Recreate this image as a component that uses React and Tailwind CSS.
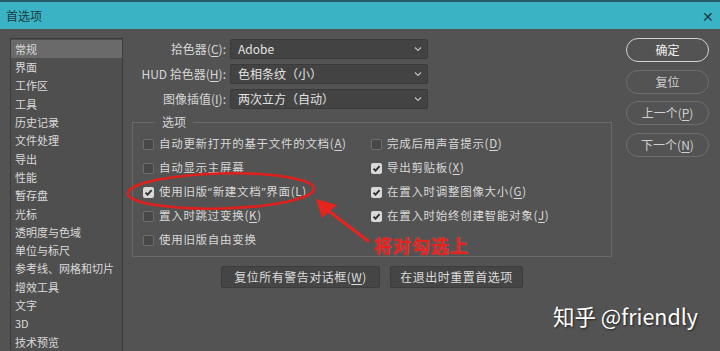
import React from "react";

const font = { fontFamily: '"Noto Sans CJK SC", "Noto Sans", sans-serif' };

const navItems = [
  "常规", "界面", "工作区", "工具", "历史记录", "文件处理", "导出", "性能", "暂存盘", "光标",
  "透明度与色域", "单位与标尺", "参考线、网格和切片", "增效工具", "文字", "3D", "技术预览",
];

function Key({ k }) {
  return (
    <>
      (<span className="underline underline-offset-2">{k}</span>)
    </>
  );
}

function Q({ children }) {
  return <span className="font-['Noto_Sans',sans-serif]">{children}</span>;
}

function Select({ label, k, value, prefix }) {
  return (
    <div className="flex items-center h-[20px]">
      <div className="w-[94px] text-right text-[12px] text-[#d6d6d6] whitespace-nowrap">
        {prefix}
        {label}
        <Key k={k} />:
      </div>
      <div className="ml-[4px] w-[198px] h-[20px] bg-[#434343] border border-[#3a3a3a] rounded-[2px] flex items-center justify-between pl-[7px] pr-[5px] text-[12px] text-[#e2e2e2]">
        <span>{value}</span>
        <svg width="8" height="6" viewBox="0 0 8 6" fill="none">
          <path d="M1 1.5 L4 4.5 L7 1.5" stroke="#bdbdbd" strokeWidth="1.2" />
        </svg>
      </div>
    </div>
  );
}

function Check({ checked, children }) {
  return (
    <div className="flex items-center h-[24px] text-[11.5px] text-[#d8d8d8] tracking-[0.7px] whitespace-nowrap">
      {checked ? (
        <div className="w-[11px] h-[11px] rounded-[2px] bg-[#d9d9d9] flex items-center justify-center">
          <svg width="9" height="9" viewBox="0 0 9 9" fill="none">
            <path d="M1.5 4.6 L3.6 6.7 L7.6 2.2" stroke="#2e2e2e" strokeWidth="1.8" />
          </svg>
        </div>
      ) : (
        <div className="w-[11px] h-[11px] rounded-[2px] bg-[#474747] border border-[#6d6d6d]" />
      )}
      <span className="ml-[5px]">{children}</span>
    </div>
  );
}

function RoundBtn({ children, primary }) {
  return (
    <div
      className={
        "h-[24px] w-[83px] rounded-full flex items-center justify-center text-[12px] " +
        (primary
          ? "border-[1.5px] border-[#d2d2d2] text-[#f0f0f0]"
          : "border-[1.5px] border-[#6e6e6e] text-[#d0d0d0]")
      }
    >
      {children}
    </div>
  );
}

export default function App() {
  return (
    <div style={font} className="relative w-[720px] h-[351px] overflow-hidden bg-[#535353]">
      {/* title bar */}
      <div className="h-[29px] bg-[#3ab4c5] border-t-2 border-[#275c66] flex items-center justify-between pl-[6px] pr-[6px]">
        <span className="text-[12px] text-[#1d3b40]">首选项</span>
        <span className="text-[14px] text-[#1d3b40] leading-none">✕</span>
      </div>

      <div className="flex">
        {/* left nav */}
        <div className="ml-[10px] mt-[9px] w-[113px] h-[330px] bg-[#4f4f4f] border border-[#3b3b3b] pt-[1px]">
          {navItems.map((t, i) => (
            <div
              key={t}
              className={
                "h-[18.3px] flex items-center pl-[4px] text-[11px] text-[#dadada] whitespace-nowrap " +
                (i === 0 ? "bg-[#6a6a6a]" : "")
              }
            >
              {t}
            </div>
          ))}
        </div>

        {/* middle */}
        <div className="w-[503px] pl-[9px] pr-[14px]">
          <div className="mt-[10px] flex flex-col gap-[5px]">
            <Select label="拾色器" k="C" value="Adobe" />
            <Select prefix="HUD " label="拾色器" k="H" value="色相条纹（小）" />
            <Select label="图像插值" k="I" value="两次立方（自动）" />
          </div>

          <fieldset className="mt-[5px] border border-[#6a6a6a] h-[143px] px-[10px]">
            <legend className="ml-[12px] px-[7px] text-[12px] text-[#d6d6d6] leading-[16px]">选项</legend>
            <div className="flex pt-[2px]">
              <div className="w-[228px] flex flex-col">
                <Check>自动更新打开的基于文件的文档<Key k="A" /></Check>
                <Check>自动显示主屏幕</Check>
                <Check checked>使用旧版<Q>“</Q>新建文档<Q>”</Q>界面<Key k="L" /></Check>
                <Check>置入时跳过变换<Key k="K" /></Check>
                <Check>使用旧版自由变换</Check>
              </div>
              <div className="flex flex-col">
                <Check>完成后用声音提示<Key k="D" /></Check>
                <Check checked>导出剪贴板<Key k="X" /></Check>
                <Check checked>在置入时调整图像大小<Key k="G" /></Check>
                <Check checked>在置入时始终创建智能对象<Key k="J" /></Check>
              </div>
            </div>
          </fieldset>

          <div className="mt-[9px] flex justify-center gap-[10px]">
            <div className="w-[159px] h-[22px] bg-[#454545] border border-[#3c3c3c] rounded-[2px] flex items-center justify-center text-[12px] text-[#dcdcdc] tracking-[0.5px]">
              复位所有警告对话框<Key k="W" />
            </div>
            <div className="w-[133px] h-[22px] bg-[#454545] border border-[#3c3c3c] rounded-[2px] flex items-center justify-center text-[12px] text-[#dcdcdc] tracking-[0.5px]">
              在退出时重置首选项
            </div>
          </div>
        </div>

        {/* right buttons */}
        <div className="mt-[9px] flex flex-col gap-[7.5px]">
          <RoundBtn primary>确定</RoundBtn>
          <RoundBtn>复位</RoundBtn>
          <RoundBtn>上一个<Key k="P" /></RoundBtn>
          <RoundBtn>下一个<Key k="N" /></RoundBtn>
        </div>
      </div>

      {/* red annotations overlay */}
      <svg className="absolute left-0 top-0" width="720" height="351" viewBox="0 0 720 351" fill="none">
        <ellipse cx="221" cy="191" rx="93" ry="17.5" stroke="#e0201c" strokeWidth="2.6" transform="rotate(-1.5 221 191)" />
        <path d="M326 209 L368 241" stroke="#e8241e" strokeWidth="3" strokeLinecap="round" />
        <path d="M316 199 L337 205 L322 218 Z" fill="#e8241e" />
      </svg>
      <div className="absolute left-[374px] top-[234px] text-[18px] font-bold text-[#e3221d] tracking-[1px] leading-[22px] [text-shadow:0_0_1px_#ff6060]">
        将对勾选上
      </div>

      {/* watermark */}
      <div className="absolute left-[553px] top-[302px] text-[21.5px] text-white leading-[28px] [text-shadow:1px_1px_2px_rgba(0,0,0,0.6)] whitespace-nowrap">
        知乎 @friendly
      </div>
    </div>
  );
}
